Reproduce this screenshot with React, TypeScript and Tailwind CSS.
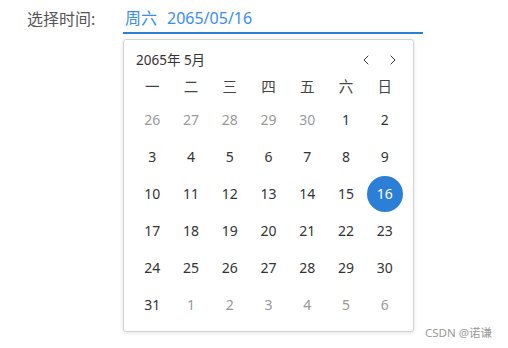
import React from "react";
import { ChevronLeft, ChevronRight } from "lucide-react";

type Day = { n: number; muted?: boolean; selected?: boolean };

const weekdays = ["一", "二", "三", "四", "五", "六", "日"];

const buildDays = (): Day[] => {
  const days: Day[] = [];
  [26, 27, 28, 29, 30].forEach((n) => days.push({ n, muted: true }));
  for (let i = 1; i <= 31; i++) days.push({ n: i, selected: i === 16 });
  for (let i = 1; i <= 6; i++) days.push({ n: i, muted: true });
  return days;
};

const App: React.FC = () => {
  const days = buildDays();

  return (
    <div
      className="relative h-[348px] w-[508px] overflow-hidden bg-white text-[#333]"
      style={{ fontFamily: '"Noto Sans", "Noto Sans CJK SC", sans-serif' }}
    >
      <div className="flex items-start">
        <div className="flex h-[34px] w-[123px] items-center pl-[27px] pt-[3px] text-[16px] text-[#555]">
          选择时间:
        </div>
        <div className="flex h-[34px] w-[300px] items-center border-b-2 border-[#2b7fd6] pl-[2px] pt-[3px] text-[16px] text-[#3a8ee6]">
          <span>周六</span>
          <span className="ml-[10px]">2065/05/16</span>
        </div>
      </div>

      <div className="ml-[123px] mt-[5px] h-[293px] w-[291px] rounded-[3px] border border-[#d4d4d4] bg-white px-[9px] pb-[8px] pt-[7px] shadow-[0_1px_4px_rgba(0,0,0,0.12)]">
        <div className="flex h-[26px] items-center justify-between pl-[3px] pr-[3px]">
          <span className="text-[13.5px] text-[#333]">2065年 5月</span>
          <div className="flex items-center gap-[11px] text-[#333]">
            <ChevronLeft size={16} strokeWidth={1.5} />
            <ChevronRight size={16} strokeWidth={1.5} />
          </div>
        </div>

        <div className="grid h-[28px] grid-cols-7 items-center text-[14.5px] text-[#444]">
          {weekdays.map((w) => (
            <div key={w} className="flex justify-center">
              {w}
            </div>
          ))}
        </div>

        <div className="grid grid-cols-7 auto-rows-[37px]">
          {days.map((d, i) => (
            <div key={i} className="flex items-center justify-center">
              {d.selected ? (
                <div className="flex h-[36px] w-[36px] items-center justify-center rounded-full bg-[#2b7fd6] text-[14px] text-white">
                  {d.n}
                </div>
              ) : (
                <span
                  className={
                    d.muted ? "text-[14px] text-[#999]" : "text-[14px] text-[#333]"
                  }
                >
                  {d.n}
                </span>
              )}
            </div>
          ))}
        </div>
      </div>

      <div className="absolute bottom-[7px] right-[16px] text-[11.5px] text-[#999]">
        CSDN @诺谦
      </div>
    </div>
  );
};

export default App;
